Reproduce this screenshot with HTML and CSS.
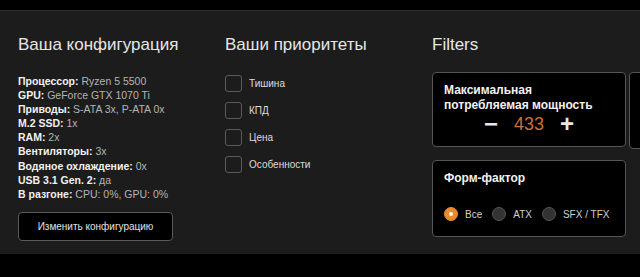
FILE: index.html
```html
<!DOCTYPE html>
<html lang="ru">
<head>
    <meta charset="UTF-8">
    <meta name="viewport" content="width=device-width, initial-scale=1.0">
    <title>Конфигуратор блока питания</title>
    <link rel="stylesheet" href="styles.css">
</head>
<body>
    <div class="panel">
        <section class="column config">
            <h2>Ваша конфигурация</h2>
            <ul class="specs">
                <li><b>Процессор:</b> Ryzen 5 5500</li>
                <li><b>GPU:</b> GeForce GTX 1070 Ti</li>
                <li><b>Приводы:</b> S-ATA 3x, P-ATA 0x</li>
                <li><b>M.2 SSD:</b> 1x</li>
                <li><b>RAM:</b> 2x</li>
                <li><b>Вентиляторы:</b> 3x</li>
                <li><b>Водяное охлаждение:</b> 0x</li>
                <li><b>USB 3.1 Gen. 2:</b> да</li>
                <li><b>В разгоне:</b> CPU: 0%, GPU: 0%</li>
            </ul>
            <button class="outline-button">Изменить конфигурацию</button>
        </section>

        <section class="column priorities">
            <h2>Ваши приоритеты</h2>
            <label class="check"><span class="box"></span>Тишина</label>
            <label class="check"><span class="box"></span>КПД</label>
            <label class="check"><span class="box"></span>Цена</label>
            <label class="check"><span class="box"></span>Особенности</label>
        </section>

        <section class="column filters">
            <h2>Filters</h2>
            <div class="card">
                <h3>Максимальная потребляемая мощность</h3>
                <div class="stepper">
                    <span class="step">&minus;</span>
                    <span class="value">433</span>
                    <span class="step">+</span>
                </div>
            </div>
            <div class="card">
                <h3>Форм-фактор</h3>
                <div class="radios">
                    <span class="radio checked"></span><span class="radio-label">Все</span>
                    <span class="radio"></span><span class="radio-label">ATX</span>
                    <span class="radio"></span><span class="radio-label">SFX / TFX</span>
                </div>
            </div>
        </section>

        <section class="column more">
            <h2>&nbsp;</h2>
            <div class="card card-empty"></div>
        </section>
    </div>
</body>
</html>
```

FILE: styles.css
```css
body {
    margin: 0;
    padding-top: 10px;
    background-color: #000;
    color: #ececec;
    font-family: 'Liberation Sans', Arial, sans-serif;
    overflow: hidden;
    height: 277px;
}

.panel {
    display: flex;
    background-color: #1c1c1c;
    border-top: 1px solid #2e2e2e;
    padding: 23px 0 13px 18px;
    height: 207px;
    overflow: hidden;
}

.column {
    flex: none;
    width: 207px;
}

.column.filters {
    width: 194px;
    margin-right: 3px;
}

.column.more {
    width: 194px;
}

h2 {
    margin: 0;
    font-size: 17px;
    font-weight: normal;
    line-height: 21px;
    color: #e6e6e6;
}

.specs {
    list-style: none;
    margin: 19px 0 0 0;
    padding: 0;
    font-size: 10.5px;
    line-height: 14.1px;
    color: #b4b4b4;
}

.specs b {
    color: #f2f2f2;
}

.outline-button {
    display: block;
    margin-top: 11px;
    width: 155px;
    height: 29px;
    background-color: #000;
    border: 1px solid #5a5a5a;
    border-radius: 4px;
    color: #e0e0e0;
    font-family: inherit;
    font-size: 10px;
    padding: 0;
}

.priorities h2 {
    margin-bottom: 20px;
}

.check {
    display: flex;
    align-items: center;
    height: 17px;
    margin-top: 10px;
    font-size: 10px;
    color: #dcdcdc;
}

.box {
    width: 15px;
    height: 15px;
    border: 1px solid #5a5a5a;
    border-radius: 3px;
    margin-right: 7px;
}

.filters h2, .more h2 {
    margin-bottom: 17px;
}

.card {
    background-color: #000;
    border: 1px solid #555;
    border-radius: 4px;
    padding: 10px 11px 11px;
    margin-bottom: 13px;
}

.card-empty {
    height: 54px;
}

.card h3 {
    margin: 0;
    font-size: 12px;
    line-height: 15px;
    color: #f2f2f2;
}

.stepper {
    display: flex;
    justify-content: center;
    align-items: center;
    gap: 16px;
    height: 22px;
}

.step {
    font-size: 24px;
    font-weight: bold;
    color: #e8e8e8;
    line-height: 22px;
}

.value {
    font-size: 18px;
    color: #c8703e;
}

.radios {
    display: flex;
    align-items: center;
    margin-top: 21px;
    margin-bottom: 4px;
    font-size: 10px;
    color: #d0d0d0;
    white-space: nowrap;
}

.radio {
    flex: none;
    width: 12px;
    height: 12px;
    border: 1px solid #555;
    border-radius: 50%;
    background-color: #333;
    margin-right: 7px;
}

.radio.checked {
    background-color: #ea8a2c;
    border-color: #ea8a2c;
    position: relative;
}

.radio.checked::after {
    content: "";
    position: absolute;
    left: 4px;
    top: 4px;
    width: 4px;
    height: 4px;
    border-radius: 50%;
    background-color: #fff;
}

.radio-label {
    flex: none;
    margin-right: 10px;
}
```
